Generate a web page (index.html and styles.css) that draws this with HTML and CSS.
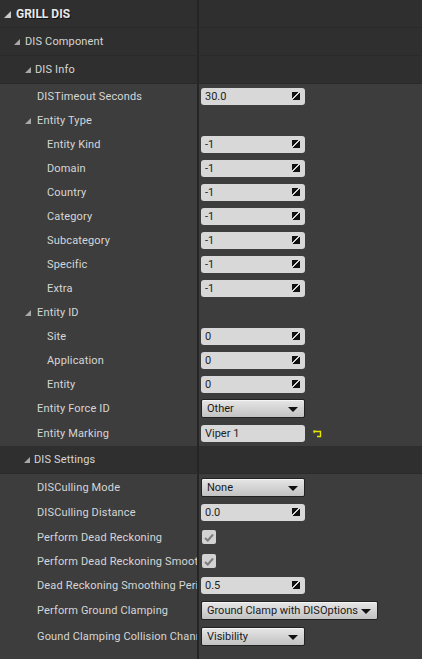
FILE: index.html
```html
<!DOCTYPE html>
<html>
<head>
<meta charset="utf-8">
<link rel="stylesheet" href="styles.css">
</head>
<body>
<div class="panel">
  <div class="row cat top"><div class="name p4"><span class="tri light"></span><span class="bold">GRILL DIS</span></div><div class="val"></div></div>
  <div class="row cat"><div class="name p14"><span class="tri"></span>DIS Component</div><div class="val"></div></div>
  <div class="row cat"><div class="name p25"><span class="tri g4"></span>DIS Info</div><div class="val"></div></div>

  <div class="row"><div class="name p37">DISTimeout Seconds</div><div class="val"><div class="num">30.0<span class="spin"></span></div></div></div>
  <div class="row"><div class="name p25"><span class="tri g5"></span>Entity Type</div><div class="val"></div></div>
  <div class="row"><div class="name p47">Entity Kind</div><div class="val"><div class="num">-1<span class="spin"></span></div></div></div>
  <div class="row"><div class="name p47">Domain</div><div class="val"><div class="num">-1<span class="spin"></span></div></div></div>
  <div class="row"><div class="name p47">Country</div><div class="val"><div class="num">-1<span class="spin"></span></div></div></div>
  <div class="row"><div class="name p47">Category</div><div class="val"><div class="num">-1<span class="spin"></span></div></div></div>
  <div class="row"><div class="name p47">Subcategory</div><div class="val"><div class="num">-1<span class="spin"></span></div></div></div>
  <div class="row"><div class="name p47">Specific</div><div class="val"><div class="num">-1<span class="spin"></span></div></div></div>
  <div class="row"><div class="name p47">Extra</div><div class="val"><div class="num">-1<span class="spin"></span></div></div></div>
  <div class="row"><div class="name p25"><span class="tri g5"></span>Entity ID</div><div class="val"></div></div>
  <div class="row"><div class="name p47">Site</div><div class="val"><div class="num">0<span class="spin"></span></div></div></div>
  <div class="row"><div class="name p47">Application</div><div class="val"><div class="num">0<span class="spin"></span></div></div></div>
  <div class="row"><div class="name p47">Entity</div><div class="val"><div class="num">0<span class="spin"></span></div></div></div>
  <div class="row h25"><div class="name p37">Entity Force ID</div><div class="val"><div class="combo">Other<span class="arrow"></span></div></div></div>
  <div class="row h25"><div class="name p37">Entity Marking</div><div class="val"><div class="num">Viper 1</div><svg class="reset" width="9" height="8" viewBox="0 0 9 8"><path d="M1.5 1.5 H7.5 V6.5 H4" fill="none" stroke="#e6e600" stroke-width="1.4"/><path d="M0 0.5 L3 0.5 L1 3.8 Z" fill="#e6e600"/></svg></div></div>

  <div class="row cat"><div class="name p24"><span class="tri g4"></span>DIS Settings</div><div class="val"></div></div>

  <div class="row h26"><div class="name p37">DISCulling Mode</div><div class="val"><div class="combo">None<span class="arrow"></span></div></div></div>
  <div class="row h25"><div class="name p37">DISCulling Distance</div><div class="val"><div class="num">0.0<span class="spin"></span></div></div></div>
  <div class="row"><div class="name p37">Perform Dead Reckoning</div><div class="val"><div class="check"><svg width="10" height="9" viewBox="0 0 10 9"><path d="M1 5 L3.8 7.5 L9 1.5" fill="none" stroke="#7d7d7d" stroke-width="2"/></svg></div></div></div>
  <div class="row"><div class="name p37"><span class="clip">Perform Dead Reckoning Smoothing</span></div><div class="val"><div class="check"><svg width="10" height="9" viewBox="0 0 10 9"><path d="M1 5 L3.8 7.5 L9 1.5" fill="none" stroke="#7d7d7d" stroke-width="2"/></svg></div></div></div>
  <div class="row"><div class="name p37"><span class="clip">Dead Reckoning Smoothing Period Seconds</span></div><div class="val"><div class="num">0.5<span class="spin"></span></div></div></div>
  <div class="row h26"><div class="name p37">Perform Ground Clamping</div><div class="val"><div class="combo wide">Ground Clamp with DISOptions<span class="arrow"></span></div></div></div>
  <div class="row h26"><div class="name p37"><span class="clip">Gound Clamping Collision Channel</span></div><div class="val"><div class="combo">Visibility<span class="arrow"></span></div></div></div>
  <div class="row fill"><div class="name"></div><div class="val"></div></div>
</div>
</body>
</html>
```

FILE: styles.css
```css
* { box-sizing: border-box; }
html, body { margin: 0; padding: 0; background: #3d3d3d; }
body {
  width: 422px;
  height: 659px;
  overflow: hidden;
  font-family: Roboto, "Noto Sans", sans-serif;
  font-size: 11px;
  letter-spacing: 0.15px;
  color: #d6d6d6;
}
.panel { display: flex; flex-direction: column; height: 659px; }
.row { display: flex; height: 24px; background: #3d3d3d; }
.row.h25 { height: 25px; }
.row.h26 { height: 26px; }
.row.cat { height: 28px; background: #2f2f2f; border-bottom: 1px solid #2a2a2a; }
.row.fill { flex: 1; }
.name {
  width: 199px;
  flex: none;
  display: flex;
  align-items: center;
  white-space: nowrap;
  overflow: hidden;
  border-right: 2px solid #252525;
}
.clip { display: block; overflow: hidden; white-space: nowrap; min-width: 0; }
.val { flex: 1; display: flex; align-items: center; padding-left: 2px; letter-spacing: 0; }
.p4 { padding-left: 4px; }
.p14 { padding-left: 14px; }
.p24 { padding-left: 24px; }
.p25 { padding-left: 25px; }
.p37 { padding-left: 37px; }
.p47 { padding-left: 47px; }
.tri {
  width: 0; height: 0;
  border-left: 6px solid transparent;
  border-bottom: 6px solid #a8a8a8;
  margin-right: 5px;
  margin-top: 1px;
  flex: none;
}
.tri.light { border-bottom-color: #c8c8c8; border-left-width: 7px; border-bottom-width: 7px; margin-right: 5px; }
.tri.g4 { margin-right: 4px; }
.tri.g5 { margin-right: 6px; }
.bold { font-weight: bold; font-size: 12px; letter-spacing: 0; color: #e8e8e8; text-shadow: 1px 1px 0 #111; }
.num {
  position: relative;
  width: 104px;
  height: 17px;
  background: #d8d8d8;
  border-radius: 3px;
  color: #1e1e1e;
  display: flex;
  align-items: center;
  padding-left: 4px;
}
.spin {
  position: absolute;
  right: 5px;
  top: 4px;
  width: 8px;
  height: 8px;
  background:
    linear-gradient(135deg, #111 0 40%, transparent 40% 55%, #111 55% 100%);
}
.combo {
  position: relative;
  width: 104px;
  height: 19px;
  border: 1px solid #222;
  border-radius: 2px;
  background: linear-gradient(#e6e6e6, #c2c2c2);
  color: #1a1a1a;
  display: flex;
  align-items: center;
  padding-left: 5px;
  box-shadow: inset 0 1px 0 #f4f4f4;
}
.combo.wide { width: 177px; }
.arrow {
  position: absolute;
  right: 6px;
  top: 7px;
  width: 0; height: 0;
  border-left: 5px solid transparent;
  border-right: 5px solid transparent;
  border-top: 5px solid #111;
}
.check {
  width: 14px;
  height: 14px;
  margin-left: 1px;
  background: #d2d2d2;
  border-radius: 2px;
  display: flex;
  align-items: center;
  justify-content: center;
}
.reset { margin-left: 8px; }
```
